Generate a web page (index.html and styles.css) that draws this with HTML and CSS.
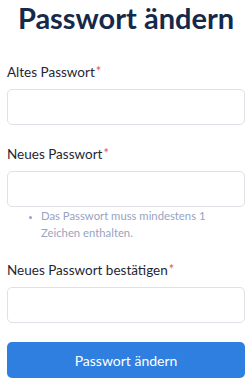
FILE: index.html
```html
<!DOCTYPE html>
<html lang="de">
<head>
    <meta charset="UTF-8">
    <meta name="viewport" content="width=device-width, initial-scale=1.0">
    <title>Passwort ändern</title>
    <link rel="stylesheet" href="styles.css">
</head>
<body>
    <div class="page">
        <h1 class="title">Passwort ändern</h1>
        <form class="form" action="">
            <div class="field">
                <label class="label">Altes Passwort<span class="req">*</span></label>
                <input type="password" class="input">
            </div>
            <div class="field">
                <label class="label">Neues Passwort<span class="req">*</span></label>
                <input type="password" class="input">
                <ul class="hint">
                    <li>Das Passwort muss mindestens 1 Zeichen enthalten.</li>
                </ul>
            </div>
            <div class="field last">
                <label class="label">Neues Passwort bestätigen<span class="req">*</span></label>
                <input type="password" class="input">
            </div>
            <button type="submit" class="button">Passwort ändern</button>
        </form>
    </div>
</body>
</html>
```

FILE: styles.css
```css
body{
    margin: 0;
    font-family: Lato, "Open Sans", sans-serif;
    color: #1f2633;
    background: white;
}
.page{
    padding: 0 7px 0 7px;
}
.title{
    margin: 0;
    padding-top: 1px;
    text-align: center;
    font-size: 29px;
    font-weight: 700;
    color: #15294a;
    line-height: 34px;
}
.form{
    margin-top: 28px;
}
.field{
    margin-bottom: 20px;
}
.field.last{
    margin-bottom: 19px;
}
.label{
    display: block;
    height: 18px;
    font-size: 13.5px;
    line-height: 18px;
    margin-bottom: 8px;
}
.req{
    color: #e8594e;
    font-size: 13px;
    line-height: 1;
    vertical-align: 1px;
    margin-left: 1px;
}
.input{
    display: block;
    box-sizing: border-box;
    width: 100%;
    height: 36px;
    border: 1px solid #dfe1e7;
    border-radius: 5px;
    outline: none;
}
.hint{
    margin: 0;
    padding-left: 34px;
    padding-right: 20px;
    font-size: 11.3px;
    line-height: 17px;
    color: #98a3c2;
}
.hint li{
    list-style: disc;
}
.hint li::marker{
    font-size: 8px;
}
.button{
    display: block;
    width: 100%;
    height: 36px;
    border: none;
    border-radius: 5px;
    background-color: #2f7fe0;
    color: white;
    font-family: Lato, "Open Sans", sans-serif;
    font-size: 14px;
    cursor: pointer;
}
```
